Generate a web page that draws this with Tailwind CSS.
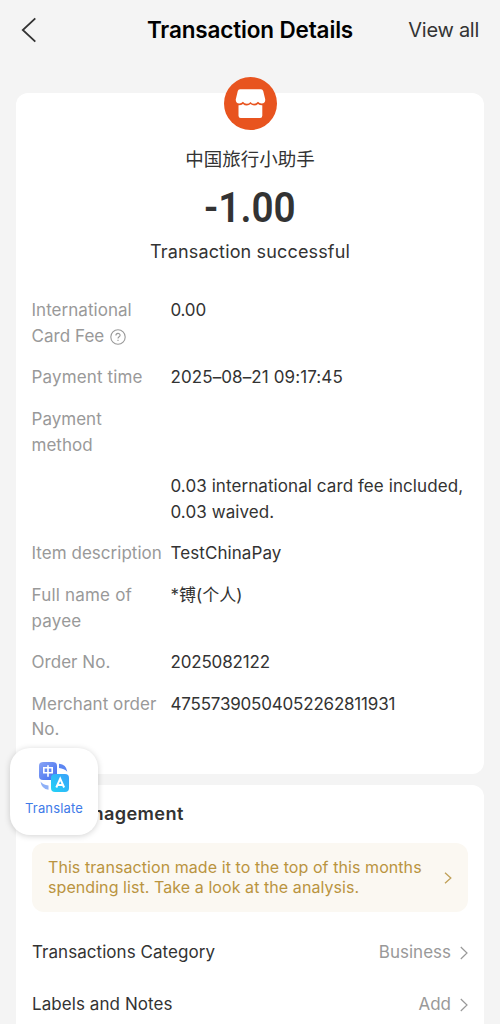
<!DOCTYPE html>
<html lang="en">
<head>
<meta charset="utf-8">
<meta name="viewport" content="width=device-width, initial-scale=1">
<title>Transaction Details</title>
<script src="https://cdn.jsdelivr.net/npm/@tailwindcss/browser@4"></script>
</head>
<body class="h-[1024px] overflow-hidden bg-[#f4f4f4] font-['Inter','Noto_Sans_CJK_SC',sans-serif] text-[17px] font-[380] text-[#333]">
<div class="relative flex h-[1024px] flex-col overflow-hidden px-4">
  <header class="grid h-[60px] shrink-0 grid-cols-[1fr_auto_1fr] items-center">
    <svg class="ml-[5px] size-[26px]" viewBox="0 0 26 26" fill="none" stroke="#333" stroke-width="1.8"><path d="M14.3 1.3 1.8 13l12.5 11.7"/></svg>
    <h1 class="text-[22.500px] font-semibold tracking-[-0.15px] whitespace-nowrap text-black">Transaction Details</h1>
    <span class="mr-[5px] text-right text-[20px] tracking-[-0.27px] whitespace-nowrap">View all</span>
  </header>

  <main class="mt-[33px] flex h-[681px] shrink-0 flex-col rounded-xl bg-white px-4">
    <div class="-mt-4 flex flex-col items-center">
      <svg class="size-[53px]" viewBox="0 0 53 53">
        <circle cx="26.5" cy="26.5" r="26.5" fill="#e8541f"/>
        <path fill="#fff" d="M16 12.2h21q1.700 0 2.200 1.700l2 8.400q.4 3.700-3.500 4.200-2.200.1-3.700-1.700-1.800 2-3.900 2-2.300 0-3.600-1.900-1.500 1.900-3.700 1.900-2.300 0-3.900-2-1.500 1.800-3.700 1.700-3.800-.5-3.400-4.200l2-8.400q.5-1.700 2.200-1.700z"/>
        <path fill="#fff" d="M14.500 28.300q2.700.1 4.500-1.400 1.700 1.600 3.900 1.500 2.200 0 3.600-1.400 1.500 1.400 3.700 1.400 2.200 0 3.800-1.500 1.800 1.500 4.300 1.400v10.500q0 2.200-2.200 2.200H16.700q-2.200 0-2.200-2.200z"/>
      </svg>
      <div class="mt-[15px] text-[18.500px] leading-[28px]">中国旅行小助手</div>
      <div class="mt-[10px] flex origin-center scale-x-[0.9] items-center font-['Roboto',sans-serif] text-[43px] leading-[48px] font-semibold">-1.00</div>
      <div class="mt-[8px] text-[18px] leading-[26px] tracking-[0.15px]">Transaction successful</div>
    </div>
    <dl class="mt-[33px] -ml-[0.5px] grid grid-cols-[139px_1fr] gap-y-[15.850px] leading-[25.7px] whitespace-nowrap">
      <dt class="tracking-[0.04px] text-[#999]">International<br><span class="flex items-center gap-1.5">Card Fee
        <svg class="size-[16px]" viewBox="0 0 16 16" fill="none" stroke="#999" stroke-width="1.100"><circle cx="8" cy="8" r="7.200"/><path d="M5.900 6.500c0-2.800 4.200-2.700 4.200-.2 0 1.500-2.100 1.500-2.100 3.200M8 10.700v1.300"/></svg></span></dt>
      <dd class="tracking-[-0.2px]">0.00</dd>
      <dt class="tracking-[0.14px] text-[#999]">Payment time</dt>
      <dd class="tracking-[0.1px]">2025–08–21 09:17:45</dd>
      <dt class="tracking-[0.02px] text-[#999]">Payment<br>method</dt>
      <dd></dd>
      <dt></dt>
      <dd class="tracking-[0.08px]">0.03 international card fee included,<br>0.03 waived.</dd>
      <dt class="tracking-[0.03px] text-[#999]">Item description</dt>
      <dd class="tracking-[0.08px]">TestChinaPay</dd>
      <dt class="tracking-[0.2px] text-[#999]">Full name of<br>payee</dt>
      <dd>*镈(个人)</dd>
      <dt class="tracking-[0.04px] text-[#999]">Order No.</dt>
      <dd class="tracking-[-0.17px]">2025082122</dd>
      <dt class="tracking-[0.06px] text-[#999]">Merchant order<br>No.</dt>
      <dd class="tracking-[-0.2px]">47557390504052262811931</dd>
    </dl>
  </main>

  <section class="mt-[11px] flex h-[300px] shrink-0 flex-col rounded-xl bg-white px-4">
    <h2 class="mt-[15px] text-[18.200px] leading-[26px] font-semibold tracking-[0.35px] whitespace-nowrap">Bill Management</h2>
    <div class="mt-[17px] flex h-[69px] shrink-0 items-center justify-between rounded-xl bg-[#fbf8f2] px-4 text-[#ba943f]">
      <p class="text-[16px] leading-[19.500px] tracking-[0.07px] whitespace-nowrap">This transaction made it to the top of this months<br>spending list. Take a look at the analysis.</p>
      <svg class="h-3 w-2" viewBox="0 0 8 12" fill="none" stroke="#c0a058" stroke-width="1.300"><path d="m1 .8 5.800 5.200L1 11.200"/></svg>
    </div>
    <div class="mt-[15px] flex h-[52px] shrink-0 items-center justify-between">
      <span class="tracking-[0.05px]">Transactions Category</span>
      <span class="flex items-center gap-[9px] text-[#999]">Business
        <svg class="h-[14px] w-2" viewBox="0 0 8 14" fill="none" stroke="#999" stroke-width="1.200"><path d="m.8 1 6.200 6-6.200 6"/></svg></span>
    </div>
    <div class="flex h-[52px] shrink-0 items-center justify-between">
      <span class="tracking-[0.07px]">Labels and Notes</span>
      <span class="flex items-center gap-[9px] text-[#999]">Add
        <svg class="h-[14px] w-2" viewBox="0 0 8 14" fill="none" stroke="#999" stroke-width="1.200"><path d="m.8 1 6.200 6-6.200 6"/></svg></span>
    </div>
  </section>

  <button class="absolute top-[748px] left-[10px] flex h-[87px] w-[88px] flex-col items-center rounded-[20px] bg-white pt-[13px] shadow-[0_1px_6px_rgba(0,0,0,0.18)]">
    <svg class="size-8" viewBox="0 0 32 32">
      <defs>
        <linearGradient id="blue" x1="0" y1="0" x2="1" y2="1"><stop offset="0" stop-color="#8aa4f5"/><stop offset="1" stop-color="#3f6df0"/></linearGradient>
        <linearGradient id="cyan" x1="0" y1="1" x2="1" y2="0"><stop offset="0" stop-color="#22d3f6"/><stop offset="1" stop-color="#3aa0fa"/></linearGradient>
      </defs>
      <rect x="1" y="1" width="18" height="18" rx="4" fill="url(#blue)"/>
      <rect x="13" y="13" width="18" height="18" rx="4" fill="url(#cyan)"/>
      <path fill="#5c86f2" d="M21 2.800q7.300.5 8.300 8-3-3.300-8.300-3.800z"/>
      <path fill="#8eb0f7" d="M2.500 20.500q2.500 3.500 8 4v4.300q-7-1-8-8.300z"/>
      <path fill="none" stroke="#fff" stroke-width="1.600" d="M5.800 6.800h8.400v5H5.800zM10 4.300v11.400"/>
      <path fill="none" stroke="#fff" stroke-width="2" d="m18.300 26.500 3.900-8.800 3.900 8.800M19.700 24h5"/>
    </svg>
    <span class="mt-[6px] text-[13px] leading-[18px] font-normal tracking-[0.15px] text-[#3f7be8]">Translate</span>
  </button>
</div>
</body>
</html>
